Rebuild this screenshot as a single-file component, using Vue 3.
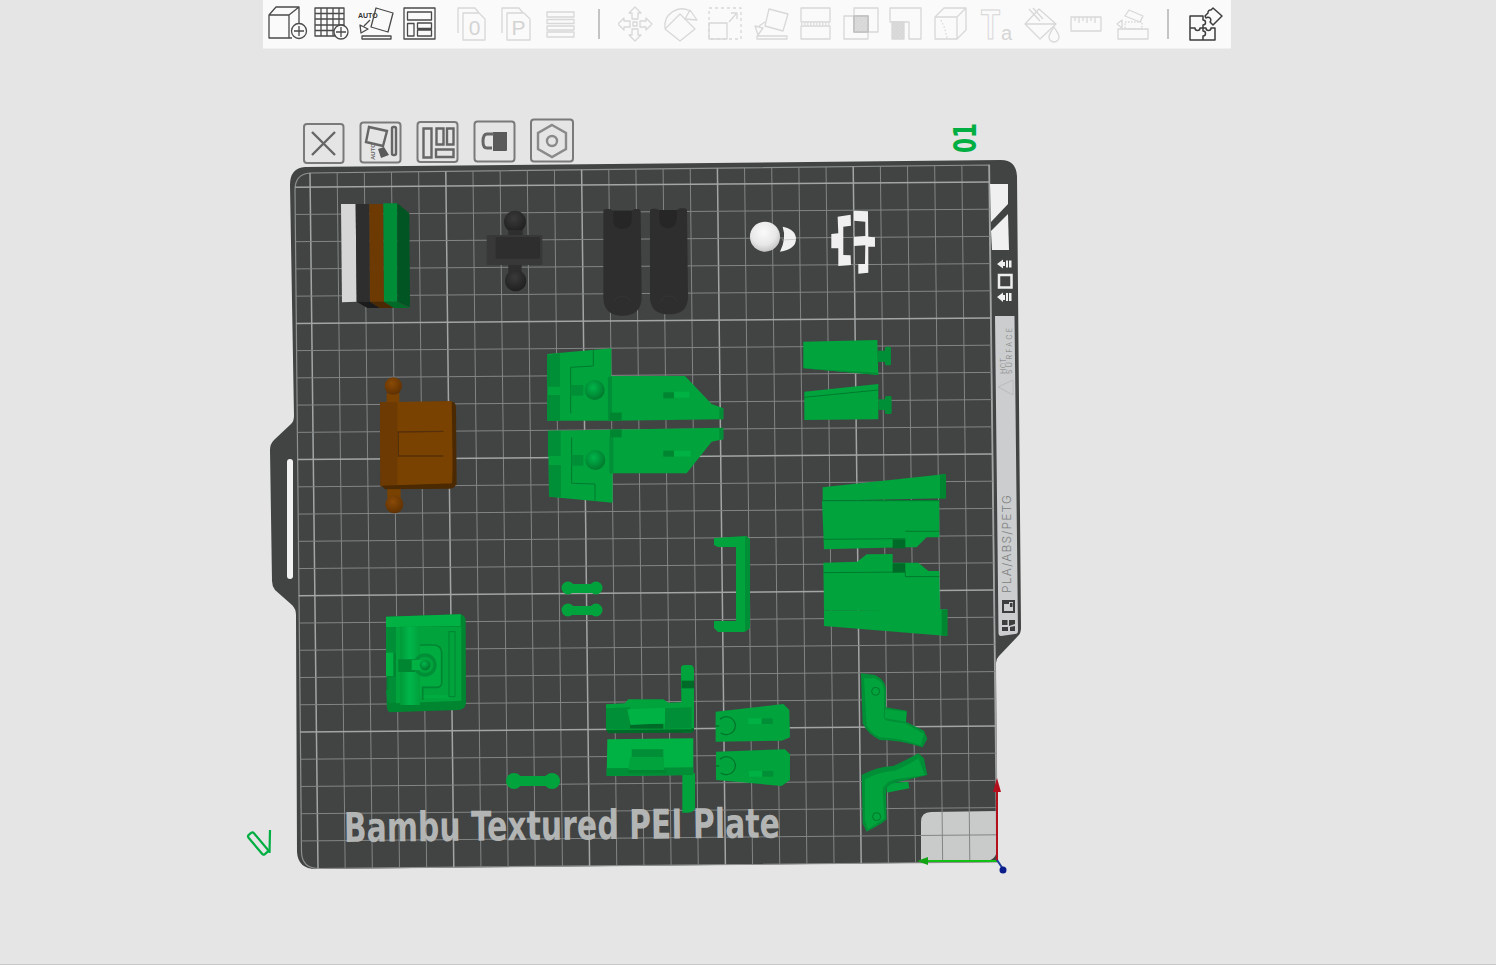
<script setup>
// build plate grid: 25 x 25 cells, slightly skewed by the 3D view
const cols = Array.from({ length: 26 }, (_, i) => ({
  x1: 310 + 27.16 * i,
  y1: 173 - 0.32 * i,
  x2: 318 + 27.16 * i,
  y2: 868.5 - 0.26 * i,
  major: i % 5 === 0,
}))
const rows = Array.from({ length: 25 }, (_, j) => ({
  x1: 295 + 0.25 * j,
  y1: 187.2 + 27.24 * j,
  x2: 989.5 + 0.31 * j,
  y2: 182 + 27.2 * j,
  major: j % 5 === 0,
}))
const arrows = [0, 90, 180, 270]
</script>

<template>
  <div class="page">
    <div class="toolbar">
      <svg width="46" height="49" viewBox="263 0 46 49" class="dark">
        <path d="M269 15h20v23h-20zM269 15l7-8h23l-10 8M299 7v16M289 38h3" />
        <circle cx="299" cy="31" r="7.5" />
        <path d="M294 31h10M299 26v10" />
      </svg>
      <svg width="43" height="49" viewBox="309 0 43 49" class="dark">
        <path d="M315 8h29v28h-29zM315 13.500h29M315 19h29M315 25h29M315 30.500h29M321 8v28M327 8v28M333 8v28M339 8v20" />
        <circle cx="341" cy="32" r="7" class="knock" />
        <path d="M336 32h10M341 27v10" />
      </svg>
      <svg width="45" height="49" viewBox="352 0 45 49" class="dark">
        <text x="358" y="18" class="auto">AUTO</text>
        <path d="M376 8l17 5-5 19-17-5zM370 20l-6 6M360 25l1 8 7-4zM362 36h29v3h-29z" />
      </svg>
      <svg width="44" height="49" viewBox="397 0 44 49" class="dark">
        <path d="M404 8h31v31h-31zM407.500 12h24v8h-24zM407.500 23.500h6.500v12.500h-6.500zM417.500 23h14v5.500h-14zM417.500 30h14v6h-14z" />
      </svg>
      <svg width="54" height="49" viewBox="441 0 54 49" class="faded">
        <path d="M458 33v-25h17l4 5M463 13h16l6 6v21h-22z" />
        <text x="474.500" y="35" class="letter">0</text>
      </svg>
      <svg width="44" height="49" viewBox="495 0 44 49" class="faded">
        <path d="M502 33v-25h17l4 5M507 13h17l6 6v21h-23z" />
        <text x="518.500" y="35" class="letter">P</text>
      </svg>
      <svg width="41" height="49" viewBox="539 0 41 49" class="faded">
        <path d="M547 12h27v5h-27zM547 19.500h27v4h-27zM547 26h27v4h-27zM547 32h27v5h-27z" />
      </svg>
      <svg width="38" height="49" viewBox="580 0 38 49" class="sep"><path d="M599 9v30" /></svg>
      <svg width="39" height="49" viewBox="618 0 39 49" class="faded">
        <path v-for="a in arrows" :key="a" :transform="`rotate(${a} 635 24)`" d="M635 7l-6 6h3v6h6v-6h3z" />
        <path d="M633 22h4v4h-4z" />
      </svg>
      <svg width="46" height="49" viewBox="657 0 46 49" class="faded">
        <path d="M665 28a17 17 0 0 1 25-17M680 14l15 15-15 12-15-12z" />
        <path d="M690 10l7 10-12-1z" />
      </svg>
      <svg width="46" height="49" viewBox="703 0 46 49" class="faded">
        <path d="M709 8h32v31h-32z" stroke-dasharray="3 3" />
        <path d="M709 23h18v16h-18zM729 22l7-8M731 13h6v6" />
      </svg>
      <svg width="44" height="49" viewBox="749 0 44 49" class="faded">
        <path d="M769 9l19 5-5 17-18-5zM765 22l-6 4M755 26l3 9 5-7zM757 36h30v3h-30z" />
      </svg>
      <svg width="45" height="49" viewBox="793 0 45 49" class="faded">
        <path d="M801 8h29v14h-29zM801 26h29v13h-29z" />
        <path d="M801 24h29" stroke-dasharray="1.500 1.500" />
      </svg>
      <svg width="46" height="49" viewBox="838 0 46 49" class="faded">
        <defs>
          <pattern id="hatch" width="3" height="3" patternUnits="userSpaceOnUse" patternTransform="rotate(45)">
            <rect width="3" height="3" fill="#f2f2f2" />
            <rect width="1.400" height="3" fill="#c4c4c4" />
          </pattern>
        </defs>
        <path d="M854 16h14v16h-14z" fill="url(#hatch)" />
        <path d="M844 16h24v23h-24zM854 8h24v24h-24z" />
        <path class="hatch-edge" d="M854 16h14v16h-14z" />
      </svg>
      <svg width="43" height="49" viewBox="884 0 43 49" class="faded">
        <path d="M892 22h12v17h-12z" fill="url(#hatch)" />
        <path d="M890 8h31v31h-12v-17h-19z" />
      </svg>
      <svg width="45" height="49" viewBox="927 0 45 49" class="faded">
        <path d="M935 17h22v22h-22zM935 17l9-9h22v22l-9 9M957 17l9-9" />
        <path d="M941 20l4 9 2 9" stroke-dasharray="1.500 2" />
      </svg>
      <svg width="46" height="49" viewBox="972 0 46 49" class="faded">
        <text x="981" y="38.500" class="big-t" textLength="19" lengthAdjust="spacingAndGlyphs">T</text>
        <text x="1001" y="39.500" class="small-a">a</text>
      </svg>
      <svg width="45" height="49" viewBox="1018 0 45 49" class="faded">
        <path d="M1025 24l14-15 17 15-16 15zM1025 24h31M1029 9l11 12M1033 8l10 11" />
        <path d="M1054 27c-3 5-5 7-5 10a5 5 0 0 0 10 0c0-3-2-5-5-10z" />
      </svg>
      <svg width="46" height="49" viewBox="1063 0 46 49" class="faded">
        <path d="M1071 17h30v14h-30zM1075 17v4M1079 17v6M1083 17v4M1087 17v6M1091 17v4M1095 17v6" />
      </svg>
      <svg width="46" height="49" viewBox="1109 0 46 49" class="faded">
        <path d="M1118 29h30v10h-30zM1129 10l14 6-3 6-15-6z" />
        <path d="M1125 22h17v7h-17z" stroke-dasharray="1.500 1.500" />
        <path d="M1122 20l-5 4 5 4z" />
      </svg>
      <svg width="26" height="49" viewBox="1155 0 26 49" class="sep"><path d="M1168 9v30" /></svg>
      <svg width="50" height="49" viewBox="1181 0 50 49" class="dark">
        <path class="puzzle" d="M1190 16h13v4a2.500 2.500 0 0 1 0 5v3h3a2.500 2.500 0 0 0 5 0h4v12h-25zM1190 28h5a2.500 2.500 0 0 0 5 0h3v3a2.500 2.500 0 0 1 0 5v4" />
        <path class="puzzle" d="M1213 8l9 8-9 9-3-3a2.500 2.500 0 0 0-4-4l-1-2 3-3a2.500 2.500 0 0 1 3-3z" />
      </svg>
    </div>

    <svg class="scene" width="1496" height="915" viewBox="0 49 1496 915">
      <defs>
        <radialGradient id="ballGreen" cx=".42" cy=".38" r=".7">
          <stop offset="0" stop-color="#00b54a" />
          <stop offset="1" stop-color="#007229" />
        </radialGradient>
        <radialGradient id="ballBrown" cx=".42" cy=".35" r=".7">
          <stop offset="0" stop-color="#8a4a06" />
          <stop offset="1" stop-color="#5c2f02" />
        </radialGradient>
        <radialGradient id="ballDark" cx=".45" cy=".35" r=".7">
          <stop offset="0" stop-color="#3a3a3a" />
          <stop offset="1" stop-color="#1e1e1e" />
        </radialGradient>
        <radialGradient id="ballWhite" cx=".45" cy=".35" r=".7">
          <stop offset="0" stop-color="#fafafa" />
          <stop offset=".6" stop-color="#e8e8e8" />
          <stop offset="1" stop-color="#bdbdbd" />
        </radialGradient>
        <linearGradient id="column" x1="0" x2="1" y1="0" y2="0">
          <stop offset="0" stop-color="#009a39" />
          <stop offset=".5" stop-color="#00b64a" />
          <stop offset="1" stop-color="#00a03b" />
        </linearGradient>
      </defs>

      <!-- plate -->
      <path class="plate" d="M305 167L1001 160Q1016 160 1017 176L1021 628Q1021 633 1018 636L999 656Q996 659 996 663L997 862L316 869Q298 869 297 852L296 615Q296 609 292 605L275 590Q272 586 272 581L270 450Q270 444 274 440L291 424Q294 421 294 416L290 185Q290 168 305 167Z" />
      <path class="hot-corner" d="M921 822Q921 812 931 812L997 811V848Q997 861 984 861L921 862Z" />
      <rect class="handle" x="287" y="459" width="6" height="120" rx="3" />

      <path class="edge" d="M295 190Q295 174 310 173L989.500 165L997.500 862L318 868.500Q302 868 301.500 852Z" />
      <line v-for="c in cols" :key="'c' + c.x1" :class="c.major ? 'major' : 'minor'" :x1="c.x1" :y1="c.y1" :x2="c.x2" :y2="c.y2" />
      <line v-for="r in rows" :key="'r' + r.y1" :class="r.major ? 'major' : 'minor'" :x1="r.x1" :y1="r.y1" :x2="r.x2" :y2="r.y2" />

      <!-- right border markings -->
      <path class="white" d="M990 184H1008V204L991 222Z" />
      <path class="white" d="M1008 214L1009 250H992L991 231Z" />
      <g class="white">
        <path d="M997 264l6-4.500v2.500h2v4h-2v2.500zM1006 260.500h2v7h-2zM1009 260.500h2.500v7h-2.500zM997 297l6-4.500v2.500h2v5h-2v2zM1006 293h2v8h-2zM1009 293h2.500v8h-2.500z" />
      </g>
      <rect class="white-line" x="999" y="275" width="12.500" height="12.500" />
      <path class="strip" d="M995 316H1014.500L1018 631Q1018 634 1015 634L1001 636Q998.500 636 998.500 633Z" />
      <text class="strip-text small" transform="translate(1006 374) rotate(-90)" textLength="16">HOT</text>
      <text class="strip-text small" transform="translate(1012 374) rotate(-90)" textLength="46">SURFACE</text>
      <path class="strip-mark" d="M998 387L1013 380V395Z" />
      <text class="strip-text" transform="translate(1011 593) rotate(-90)" textLength="98">PLA/ABS/PETG</text>
      <path class="strip-icon" d="M1002 600H1015V613H1002ZM1004 604V611H1013V602H1009V604ZM1010 603H1012.500V607H1010Z" fill-rule="evenodd" />
      <path class="strip-icon" d="M1002 620H1007.500V625H1002ZM1009 620H1015V624L1009 626ZM1002 627H1008V631H1002ZM1010 627L1015 626V631H1010Z" />

      <!-- striped block -->
      <g transform="translate(290 110) scale(.3333)">
        <path class="f-white2" d="M153 282H197L200 575L156 577Z" />
        <path class="f-black" d="M197 282H238L240 575H200Z" />
        <path class="f-brown" d="M238 282H280L282 575H240Z" />
        <path class="f-stripe" d="M280 280H322V575H282Z" />
        <path class="f-deep" d="M322 280L358 310L360 592L322 575Z" />
        <path class="f-blacker" d="M200 575H240L270 594H232Z" />
        <path class="f-brown-d" d="M240 575H282L312 594H270Z" />
        <path class="g-shadow" d="M282 575H322L360 594H312Z" />
        <!-- black connector -->
        <circle cx="675" cy="335" r="33" fill="url(#ballDark)" />
        <rect class="f-black" x="655" y="360" width="43" height="20" />
        <rect class="f-black2" x="590" y="375" width="167" height="90" rx="4" />
        <rect class="f-black" x="617" y="381" width="133" height="65" rx="3" />
        <rect class="f-black" x="655" y="465" width="40" height="25" />
        <circle cx="677" cy="512" r="32" fill="url(#ballDark)" />
      </g>

      <g transform="translate(590 110) scale(.3333)">
        <!-- straps -->
        <path class="f-black" d="M40 305Q40 297 48 297H60L70 302H125L134 297H144Q152 297 152 305L155 560Q155 617 97 617Q40 617 40 560Z" />
        <path class="f-black3" d="M70 302H125V335Q120 357 97 357Q72 357 70 335Z" />
        <path class="outline" d="M72 575A27 27 0 0 1 122 575" />
        <path class="f-black" d="M180 305Q180 296 188 296H198L208 300H260L270 295H283Q291 295 291 303L294 560Q294 613 237 613Q180 613 180 560Z" />
        <path class="f-black3" d="M208 300H260V330Q255 355 235 355Q210 355 208 330Z" />
        <path class="outline" d="M212 575A27 27 0 0 1 262 575" />
        <!-- white ball -->
        <path class="f-white" d="M578 350Q618 358 618 387Q618 418 570 425Q590 385 578 350Z" />
        <line class="hair" x1="576" y1="390" x2="618" y2="388" />
        <circle cx="525" cy="380" r="45" fill="url(#ballWhite)" />
        <!-- white bracket -->
        <path class="f-white" d="M743 320L782 314L783 347L760 350V435L782 436L783 465L745 468V415H724V372L745 370Z" />
        <path class="f-white" d="M792 302L834 304L835 380L855 382V410H835L835 488L805 491V462L825 462L826 406L792 408V380L826 378V335L792 332Z" />
        <!-- wedges -->
        <path class="g-main" d="M640 695L862 690L865 795L640 775Z" />
        <path class="g-dark" d="M640 775L865 788V795Z" />
        <rect class="g-dark" x="863" y="722" width="24" height="34" />
        <rect class="g-dark" x="885" y="710" width="18" height="56" rx="5" />
        <path class="g-main" d="M643 845L865 822V928L643 930Z" />
        <path class="seam" d="M643 862L865 840" />
        <rect class="g-dark" x="865" y="868" width="22" height="32" />
        <rect class="g-dark" x="885" y="858" width="20" height="54" rx="5" />
      </g>

      <!-- large green pair -->
      <g transform="translate(530 330) scale(.3333)">
        <path class="g-main" d="M52 72L244 55V138H465L545 222L580 235V268L244 272H52Z" />
        <path class="g-dark" d="M52 75L90 70V170H52ZM52 195H90V272H52Z" />
        <path class="seam" d="M190 60V108L122 112V250" />
        <rect class="g-dark" x="122" y="165" width="38" height="32" />
        <rect class="g-dark" x="234" y="140" width="12" height="130" />
        <rect class="g-shadow2" x="240" y="248" width="35" height="24" />
        <rect class="g-shadow2" x="400" y="187" width="32" height="18" />
        <rect class="g-light" x="432" y="185" width="46" height="18" />
        <rect class="g-dark" x="568" y="235" width="12" height="33" />
        <circle cx="194" cy="180" r="30" fill="url(#ballGreen)" />

        <path class="g-main" d="M54 302L580 293V328L545 335L470 430H248V518L57 500Z" />
        <path class="g-dark" d="M54 302H92V378H54ZM57 405H93V502L57 500Z" />
        <path class="seam" d="M125 322V460L195 462V512" />
        <rect class="g-dark" x="125" y="375" width="35" height="32" />
        <rect class="g-dark" x="238" y="322" width="12" height="108" />
        <rect class="g-shadow2" x="240" y="298" width="35" height="24" />
        <rect class="g-shadow2" x="400" y="362" width="32" height="18" />
        <rect class="g-light" x="432" y="362" width="50" height="18" />
        <rect class="g-dark" x="568" y="294" width="12" height="34" />
        <circle cx="196" cy="390" r="30" fill="url(#ballGreen)" />
      </g>

      <!-- long wedges on the right -->
      <g transform="translate(800 460) scale(.3333)">
        <path class="g-main" d="M68 82L438 42V115L68 122Z" />
        <path class="g-shadow2" d="M420 44L438 42V115L420 116Z" />
        <path class="g-main" d="M66 122L418 120V232H380L350 262H316L72 268Z" />
        <path class="seam" d="M66 122H418M70 238L316 236M316 214L418 214" />
        <path class="g-shadow" d="M278 238H316V265H278Z" />
        <path class="g-main" d="M172 305L200 283L278 282V308H355L385 333H418L420 450L72 452L70 308Z" />
        <path class="seam" d="M70 338L316 336M316 336V350H418" />
        <path class="g-shadow" d="M278 310H316V337L278 338Z" />
        <path class="g-main" d="M72 452L442 448V528L72 498Z" />
        <path class="g-shadow2" d="M425 450H442V528L425 526Z" />
      </g>

      <!-- brown block and green block -->
      <g transform="translate(370 370) scale(.3333)">
        <rect class="f-brown-m" x="50" y="70" width="38" height="30" />
        <circle cx="70" cy="48" r="26" fill="url(#ballBrown)" />
        <rect class="f-brown-m" x="52" y="355" width="40" height="30" />
        <circle cx="73" cy="403" r="27" fill="url(#ballBrown)" />
        <path class="f-brown-d" d="M32 350L260 345V340L258 110Q256 95 245 95L30 97Z" />
        <path class="f-brown-m" d="M30 97L245 93Q250 340 245 342L32 348Z" />
        <path class="f-brown" d="M30 97H82V348L32 348Z" />
        <path class="f-brown-d" d="M35 347L258 340Q258 355 240 356L45 358Z" />
        <path class="inset" d="M82 186L220 184M85 186V258H220" />

        <path class="g-shadow2" d="M48 740L270 733Q285 735 287 750L288 1000Q285 1020 265 1020L60 1027Q50 1025 50 1000Z" />
        <path class="g-light" d="M48 740L272 733V768L48 772Z" />
        <path class="g-main" d="M78 770H274V992L78 1000Z" />
        <path class="g-dark" d="M48 772H78V800L60 840L48 848ZM48 960H78V998H52Z" />
        <path class="g-dark" d="M56 800L78 800V850L56 850ZM56 920H78V960H56Z" />
        <rect class="g-light" x="48" y="848" width="22" height="70" />
        <rect x="90" y="770" width="60" height="235" fill="url(#column)" />
        <path class="g-lighter" d="M150 825H190Q215 825 215 850V950H155V985H240V975H150V825Z" />
        <path class="curve" d="M150 825H190Q215 825 215 850V940Q215 952 200 952H158V990" />
        <rect class="slot" x="237" y="785" width="18" height="195" />
        <rect class="g-shadow2" x="85" y="868" width="50" height="38" />
        <circle class="g-dark" cx="165" cy="885" r="35" />
        <circle class="g-main" cx="165" cy="885" r="25" />
        <rect class="g-light" x="125" y="870" width="40" height="30" />
        <circle cx="165" cy="885" r="16" fill="url(#ballGreen)" />
      </g>

      <!-- loose pins and the clip -->
      <g class="g-main">
        <rect x="566" y="584" width="32" height="9" />
        <circle cx="568" cy="588" r="6.500" />
        <circle cx="596" cy="588" r="6.500" />
        <rect x="566" y="606" width="32" height="9" />
        <circle cx="568" cy="610" r="6.500" />
        <circle cx="596" cy="610" r="6.500" />
        <rect x="510" y="776" width="46" height="10" />
        <circle cx="514" cy="781" r="8" />
        <circle cx="552" cy="781" r="8" />
        <path d="M714 538L746 536L750 539V628L744 632H718L714 628V621H736V547H718L714 545Z" />
      </g>
      <path class="g-dark" d="M745 536L750 539V628L745 632Z" />

      <!-- lower group -->
      <g transform="translate(600 660) scale(.3333)">
        <path class="g-main" d="M243 22Q245 15 255 15H270Q282 15 282 30V205Q280 218 270 218H245Z" />
        <rect class="g-shadow" x="245" y="62" width="37" height="23" />
        <path class="g-shadow" d="M18 208L282 205V212Q280 218 270 218L25 220Z" />
        <path class="g-main" d="M18 133L75 130L85 118H190L205 128L275 125V208L18 210Z" />
        <path class="g-dark" d="M18 145L90 142V208H18ZM195 145L275 142V205L195 206Z" />
        <rect class="g-shadow" x="90" y="192" width="100" height="14" />
        <path class="g-light" d="M82 148L195 143V190L92 195Z" />

        <path class="g-main" d="M247 340H285V445Q280 458 265 458H247Z" />
        <path class="g-light" d="M22 238L280 235V345L20 348Z" />
        <path class="g-dark" d="M20 325L280 322V345L20 348ZM95 268H190V292H95Z" />
        <path class="g-main" d="M90 292H192V330H85Z" />
        <rect class="g-shadow2" x="85" y="330" width="115" height="10" />

        <path class="g-main" d="M347 155L550 132L568 150L570 232L545 242L347 245Z" />
        <path class="g-main" d="M348 275L555 268L570 283L570 360L545 378L348 360Z" />
        <path class="ring-open" d="M360 178A27 27 0 1 1 362 218M347 198H358" />
        <path class="ring-open" d="M360 298A27 27 0 1 1 362 338M347 318H358" />
        <rect class="g-light" x="445" y="175" width="40" height="17" />
        <rect class="g-dark" x="485" y="175" width="33" height="17" />
        <rect class="g-light" x="447" y="333" width="40" height="17" />
        <rect class="g-dark" x="487" y="333" width="33" height="17" />

        <path class="g-dark" d="M783 40L825 45Q855 60 858 85V142L920 152L918 185L972 212L982 236L968 262Q900 240 840 240Q802 222 788 190Z" />
        <path class="g-main" d="M792 55L825 55Q852 68 852 90V170Q852 180 865 183L915 190L972 222L962 256Q900 234 840 232Q812 220 800 195Z" />
        <circle class="ring" cx="827" cy="94" r="12" />
        <path class="g-main" d="M855 148L920 155L918 185L855 175Z" />

        <path class="g-main" d="M860 370L925 365L928 385L860 398Z" />
        <path class="g-dark" d="M785 345Q830 320 880 318Q920 300 955 280L972 295L982 345L885 368Q858 375 858 395L860 478Q850 490 800 515L788 490Z" />
        <path class="g-main" d="M795 358Q835 335 885 332Q925 315 955 295L975 345L885 358Q848 370 848 395L854 475L804 508L795 480Z" />
        <circle class="ring" cx="830" cy="470" r="12" />
      </g>

      <text class="plate-name" transform="translate(344 842) rotate(-0.6)" textLength="436" lengthAdjust="spacingAndGlyphs">Bambu Textured PEI Plate</text>

      <!-- axis gizmo -->
      <line class="axis-y" x1="997" y1="861" x2="928" y2="861" />
      <path class="axis-y-head" d="M917 861L928 857V865Z" />
      <line class="axis-x" x1="997" y1="861" x2="997" y2="790" />
      <path class="axis-x-head" d="M997 778L993 792H1001Z" />
      <line class="axis-z" x1="997" y1="860" x2="1003" y2="869" />
      <circle class="axis-z-head" cx="1003" cy="870" r="3.500" />

      <!-- plate number and small mark -->
      <text class="plate-no" transform="translate(976 153) rotate(-90)" textLength="30" lengthAdjust="spacingAndGlyphs">01</text>
      <rect class="mark" x="245.500" y="840" width="25" height="7" rx="2" transform="rotate(50 258 843.500)" />
      <line class="mark" x1="270" y1="830" x2="269.500" y2="853" />

      <!-- plate buttons -->
      <g class="plate-btn">
        <rect x="304" y="124" width="39.500" height="39" rx="3" />
        <path d="M312 132L335 155M335 132L312 155" />
      </g>
      <g class="plate-btn">
        <rect x="360.500" y="122.500" width="40" height="40" rx="3" />
        <path d="M369 127L387 131L383 146L366 142Z" />
        <rect x="392" y="127" width="4" height="28" rx="1.500" />
        <text class="btn-auto" transform="translate(375 160) rotate(-90)">AUTO</text>
        <path class="btn-fill" d="M378 149L384 147L389 155L381 158Z" />
      </g>
      <g class="plate-btn">
        <rect x="417.500" y="122" width="40" height="40" rx="3" />
        <path d="M423.500 128.500H431.500V157.500H423.500ZM436.500 128.500H443.500V144.500H436.500ZM447 128.500H453.500V144.500H447ZM436 149.500H453.500V157H436Z" />
      </g>
      <g class="plate-btn">
        <rect x="474.500" y="121.500" width="40" height="40" rx="3" />
        <path class="btn-fill" d="M493 132H507Q507 132 507 134V150Q507 151 506 151H493Z" />
        <path class="btn-thick" d="M494 134H487Q483 134 483 141.500Q483 148 487 148H492" />
      </g>
      <g class="plate-btn">
        <rect x="531" y="119.500" width="42" height="42" rx="3" />
        <path class="btn-thick2" d="M552 125L566 133V149L552 157L538 149V133Z" />
        <circle cx="552" cy="141" r="5" class="btn-thick2" />
      </g>
    </svg>
  </div>
</template>

<style>
html, body { margin: 0; background: #e5e5e5; }
</style>

<style scoped>
.page { width: 1496px; height: 965px; display: flex; flex-direction: column; overflow: hidden; background: #e5e5e5; box-sizing: border-box; border-bottom: 1px solid #c9c9c9; }
.toolbar { display: flex; width: 968px; height: 49px; margin-left: 263px; background: #fafafa; border-bottom: 1px solid #f0f0f0; box-sizing: border-box; flex-shrink: 0; }
.toolbar svg { flex-shrink: 0; display: block; fill: none; stroke-width: 1.3; stroke-linejoin: round; }
.dark { stroke: #4a4a4a; }
.faded { stroke: #d8d8d8; }
.sep { stroke: #a8a8a8; stroke-width: 1.6; }
.knock { fill: #fafafa; }
.hatch-edge { stroke: #c0c0c0; stroke-width: 1.6; }
.puzzle { stroke: #3d3d3d; stroke-width: 1.5; }
.auto { font: 700 7px "Liberation Sans", sans-serif; fill: #333; stroke: none; }
.letter { font: 21px "Liberation Sans", sans-serif; text-anchor: middle; fill: #d4d4d4; stroke: none; }
.big-t { font: 700 42px "Liberation Sans", sans-serif; fill: none; stroke: #d6d6d6; stroke-width: 1.2; }
.small-a { font: 20px "Liberation Sans", sans-serif; fill: #d6d6d6; stroke: none; }

.scene { display: block; flex-shrink: 0; }
.plate { fill: #424444; }
.hot-corner { fill: #c9cbcb; }
.handle { fill: #f2f2f2; }
.edge { fill: none; stroke: #8e9090; stroke-width: 1.2; }
.minor { stroke: #838585; stroke-width: 1; }
.major { stroke: #a3a5a5; stroke-width: 1.5; }
.white { fill: #f0f0f0; }
.white-line { fill: none; stroke: #eeeeee; stroke-width: 2.5; }
.strip { fill: #cbcdce; }
.strip-mark { fill: none; stroke: #b5b7b7; stroke-width: .8; }
.strip-text { font: 300 12px "Inter", "Liberation Sans", sans-serif; fill: #7d8080; }
.strip-text.small { font-size: 7px; }
.strip-icon { fill: #3c3e3e; }

.f-white { fill: #f0f0f0; }
.f-white2 { fill: #d6d6d6; }
.f-black { fill: #2e2e2e; }
.f-black2 { fill: #383838; }
.f-black3 { fill: #262626; }
.f-blacker { fill: #1b1b1b; }
.f-brown { fill: #6d3a03; }
.f-brown-m { fill: #7a4201; }
.f-brown-d { fill: #4b2902; }
.f-stripe { fill: #008d37; }
.f-deep { fill: #005522; }
.outline { fill: none; stroke: #3a3a3a; stroke-width: 2; }
.hair { stroke: #bdbdbd; stroke-width: 2; }
.inset { fill: none; stroke: #56300a; stroke-width: 4; }

.g-main { fill: #00a33c; }
.g-light { fill: #00b244; }
.g-lighter { fill: #00ac40; }
.g-dark { fill: #008f36; }
.g-shadow { fill: #006b28; }
.g-shadow2 { fill: #008531; }
.seam { fill: none; stroke: #007a2e; stroke-width: 3; }
.curve { fill: none; stroke: #008532; stroke-width: 5; }
.slot { fill: #00a33c; stroke: #008532; stroke-width: 3; }
.ring { fill: #00a33c; stroke: #00762c; stroke-width: 3; }
.ring-open { fill: none; stroke: #00762c; stroke-width: 4; }

.plate-name { font: 700 41px "DejaVu Sans Condensed", "DejaVu Sans", sans-serif; fill: #b3b5b5; }
.plate-no { font: 700 32px "DejaVu Sans", sans-serif; fill: #00ae42; }
.mark { fill: none; stroke: #00ae42; stroke-width: 2.2; }
.axis-x { stroke: #b3101d; stroke-width: 2; }
.axis-x-head { fill: #b3101d; }
.axis-y { stroke: #12bf12; stroke-width: 2; }
.axis-y-head { fill: #12a312; }
.axis-z { stroke: #1c3c9c; stroke-width: 2; }
.axis-z-head { fill: #0b1e8c; }

.plate-btn { fill: none; stroke: #666666; stroke-width: 2.4; }
.plate-btn > rect:first-child { fill: #e5e5e5; stroke: #7a7a7a; stroke-width: 2; }
.btn-auto { font: 700 6px "Liberation Sans", sans-serif; fill: #6a6a6a; stroke: none; }
.btn-fill { fill: #5a5a5a; stroke: none; }
.btn-thick { stroke-width: 3; }
.btn-thick2 { stroke: #8a8a8a; stroke-width: 2.4; }
</style>
